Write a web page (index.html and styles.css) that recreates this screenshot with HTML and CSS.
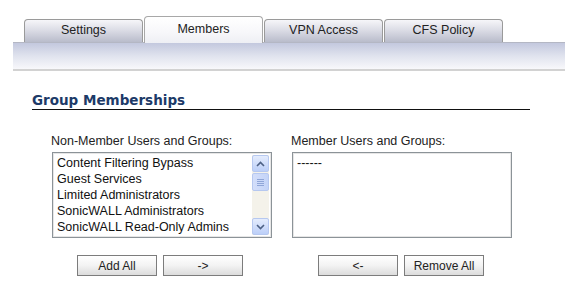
FILE: index.html
```html
<!DOCTYPE html>
<html>
<head>
    <title>Group Memberships</title>
    <link rel="stylesheet" href="styles.css">
</head>
<body>
    <div class="page">
        <div class="tabs">
            <div class="tab">Settings</div>
            <div class="tab active">Members</div>
            <div class="tab">VPN Access</div>
            <div class="tab">CFS Policy</div>
        </div>
        <div class="band"></div>

        <h2 class="section-title">Group Memberships</h2>

        <div class="columns">
            <div class="column">
                <div class="label">Non-Member Users and Groups:</div>
                <div class="listbox">
                    <div class="options">
                        <div class="option">Content Filtering Bypass</div>
                        <div class="option">Guest Services</div>
                        <div class="option">Limited Administrators</div>
                        <div class="option">SonicWALL Administrators</div>
                        <div class="option">SonicWALL Read-Only Admins</div>
                    </div>
                    <div class="scrollbar">
                        <div class="sb-btn">
                            <svg width="9" height="6" viewBox="0 0 9 6"><path d="M1 5 L4.5 1.5 L8 5" fill="none" stroke="#4d6185" stroke-width="1.6"/></svg>
                        </div>
                        <div class="sb-thumb">
                            <span></span><span></span><span></span><span></span>
                        </div>
                        <div class="sb-track"></div>
                        <div class="sb-btn">
                            <svg width="9" height="6" viewBox="0 0 9 6"><path d="M1 1 L4.5 4.5 L8 1" fill="none" stroke="#4d6185" stroke-width="1.6"/></svg>
                        </div>
                    </div>
                </div>
                <div class="buttons">
                    <button class="btn">Add All</button>
                    <button class="btn">-&gt;</button>
                </div>
            </div>

            <div class="column">
                <div class="label">Member Users and Groups:</div>
                <div class="listbox">
                    <div class="options">
                        <div class="option">------</div>
                    </div>
                </div>
                <div class="buttons right">
                    <button class="btn">&lt;-</button>
                    <button class="btn">Remove All</button>
                </div>
            </div>
        </div>
    </div>
</body>
</html>
```

FILE: styles.css
```css
* {
    margin: 0;
    padding: 0;
    box-sizing: border-box;
}

body {
    background: #fff;
    font-family: "Liberation Sans", Arial, sans-serif;
    color: #1a1a1a;
}

.page {
    width: 587px;
    padding: 15px 0 0 13px;
}

/* tab strip */
.tabs {
    display: flex;
    align-items: flex-end;
    gap: 1px;
    padding-left: 11px;
    height: 27px;
}

.tab {
    width: 119px;
    height: 23px;
    border: 1px solid #9a9a9a;
    border-bottom: none;
    border-radius: 4px 4px 0 0;
    background: linear-gradient(#f6f6f9 0%, #dcdde6 45%, #b9bccb 100%);
    font-size: 12.5px;
    color: #222;
    text-align: center;
    line-height: 21px;
}

.tab.active {
    height: 27px;
    background: linear-gradient(#ffffff 0%, #f7f7fa 60%, #eeeff4 100%);
    border-color: #a8a8a8;
    line-height: 25px;
    position: relative;
    top: 1px;
}

.band {
    width: 552px;
    height: 29px;
    background: linear-gradient(#c3c8de 0%, #e0e3ee 50%, #f8f8fb 100%);
    border-top: 1px solid #b4b7c4;
    border-bottom: 2px solid #d2d2d2;
}

/* section */
.section-title {
    margin: 22px 0 0 19px;
    width: 498px;
    font-family: "DejaVu Sans", Verdana, sans-serif;
    font-size: 13.5px;
    font-weight: bold;
    color: #1c3a68;
    border-bottom: 1px solid #111;
    padding-bottom: 1px;
    line-height: 15px;
}

.columns {
    display: flex;
    gap: 20px;
    margin: 24px 0 0 38px;
}

.column {
    width: 220px;
}

.label {
    font-size: 12.5px;
    color: #222;
    line-height: 15px;
    margin-bottom: 3px;
}

.listbox {
    display: flex;
    width: 220px;
    height: 86px;
    border: 1px solid #8c9398;
    box-shadow: inset 0 0 0 1px #e6e6e6;
    padding: 2px;
    background: #fff;
    margin-left: 1px;
}

.options {
    flex: 1;
    padding-left: 2px;
}

.option {
    font-size: 12.5px;
    line-height: 16px;
    color: #111;
    white-space: nowrap;
}

.scrollbar {
    width: 17px;
    display: flex;
    flex-direction: column;
    background: #f4f2ea;
}

.sb-btn {
    height: 17px;
    border: 1px solid #b6c8f0;
    border-radius: 2px;
    background: linear-gradient(#e4ecfd, #bccff8);
    display: flex;
    align-items: center;
    justify-content: center;
}

.sb-thumb {
    height: 18px;
    margin-top: 1px;
    border: 1px solid #b6c8f0;
    border-radius: 2px;
    background: linear-gradient(90deg, #d3defa, #c4d4f8);
    display: flex;
    flex-direction: column;
    align-items: center;
    justify-content: center;
    gap: 1px;
}

.sb-thumb span {
    width: 7px;
    height: 1px;
    background: #8fa6d8;
}

.sb-track {
    flex: 1;
}

.buttons {
    display: flex;
    gap: 6px;
    margin: 17px 0 0 26px;
}

.buttons.right {
    margin-left: 27px;
}

.btn {
    width: 80px;
    height: 21px;
    border: 1px solid #7c7c7c;
    background: linear-gradient(#ffffff 0%, #f3f3f3 50%, #dcdcdc 100%);
    font-family: "Liberation Sans", Arial, sans-serif;
    font-size: 12px;
    color: #222;
}
```
